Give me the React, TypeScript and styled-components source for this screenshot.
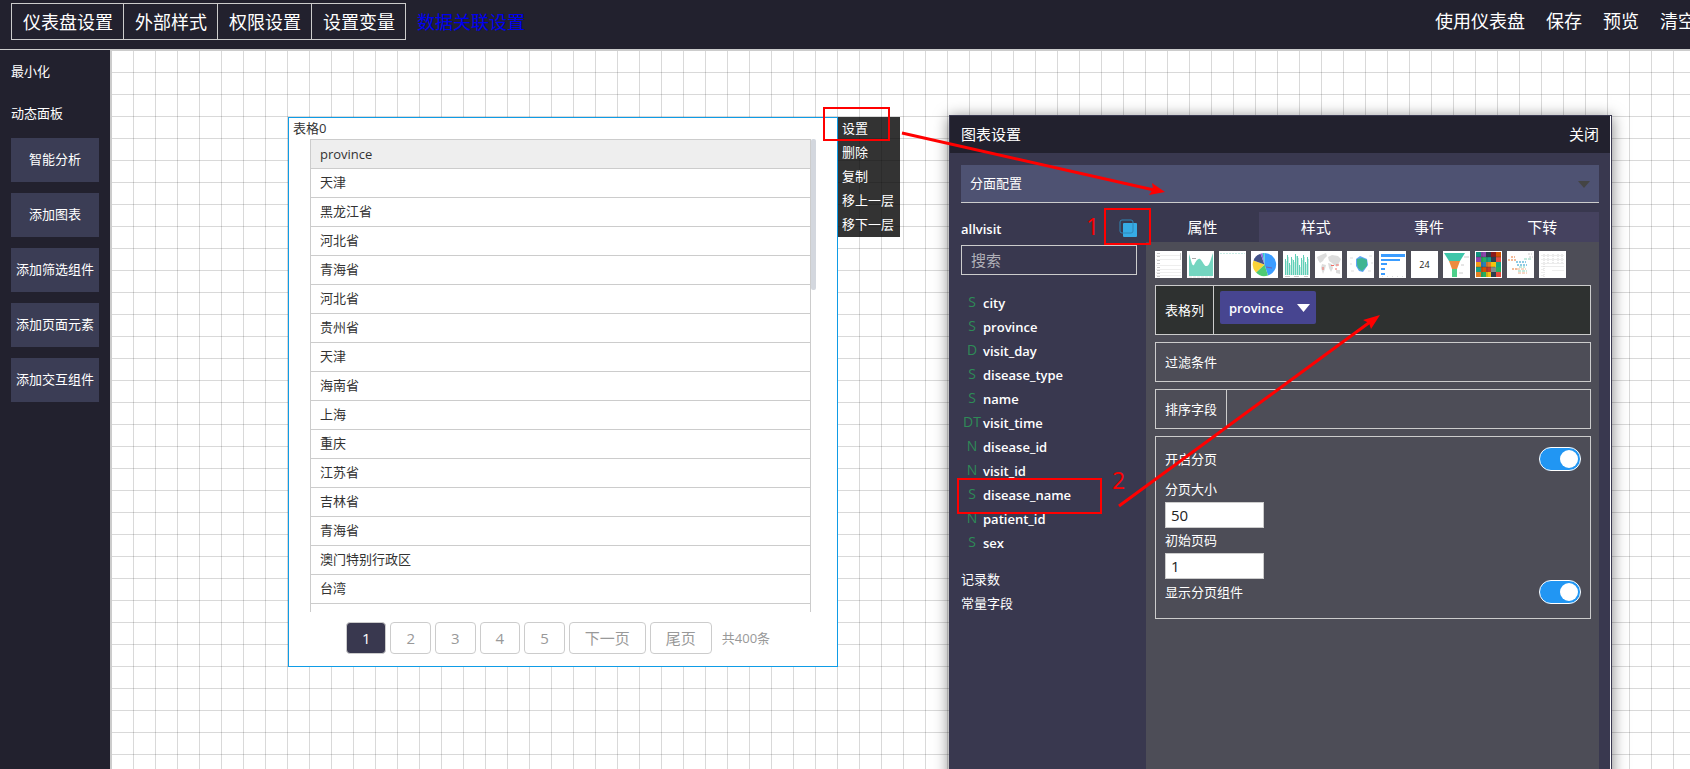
import React from "react";
import styled, { createGlobalStyle, css } from "styled-components";

const GlobalStyle = createGlobalStyle`
  *, *::before, *::after { box-sizing: border-box; }
  body {
    margin: 0;
    overflow: hidden;
    font-family: "Open Sans", "Noto Sans CJK SC", sans-serif;
    font-size: 13px;
    line-height: 24px;
    color: #333;
  }
  button, input, select { font: inherit; color: inherit; margin: 0; }
  a { text-decoration: none; }
`;

const Page = styled.div`
  display: flex;
  flex-direction: column;
  height: 100vh;
  overflow: hidden;
`;

const Header = styled.header`
  display: flex;
  flex: none;
  align-items: flex-start;
  justify-content: space-between;
  height: 50px;
  padding: 3px 0 0 11px;
  overflow: hidden;
  background: #22212e;
  border-bottom: 1px solid #ccc;
  font-size: 18px;
  line-height: 37px;
  white-space: nowrap;
`;

const HeaderGroup = styled.div`
  display: flex;
  align-items: flex-start;
`;

const HeaderButton = styled.button`
  height: 37px;
  padding: 1px 10px 0 11px;
  background: none;
  border: 1px solid #ccc;
  color: #fff;
  line-height: 34px;
  & + & { margin-left: -1px; }
`;

const RelationLink = styled.a`
  margin-left: 11px;
  color: #0000ee;
  line-height: 38px;
`;

const Actions = styled.nav`
  display: flex;
  gap: 21px;
  margin-right: -6px;
`;

const Action = styled.a`
  color: #fff;
`;

const Body = styled.div`
  display: flex;
  flex: 1;
  min-height: 0;
`;

const Sidebar = styled.aside`
  display: flex;
  flex: none;
  flex-direction: column;
  gap: 11px;
  width: 110px;
  padding: 0 11px;
  background: #22212e;
  color: #fff;
`;

const SideTitles = styled.div`
  display: flex;
  flex-direction: column;
  height: 77px;
  line-height: 44px;
  span { height: 44px; line-height: 42px; }
`;

const SideButton = styled.button`
  height: 44px;
  padding: 0 0 2px;
  background: #3b3d55;
  border: 0;
  white-space: nowrap;
`;

const Canvas = styled.main`
  position: relative;
  flex: 1;
  overflow: hidden;
  background-color: #fff;
  background-image:
    linear-gradient(to right, transparent 21px, rgba(0, 0, 0, 0.15) 21px),
    linear-gradient(to bottom, transparent 21px, rgba(0, 0, 0, 0.15) 21px);
  background-size: 22px 22px;
  border: solid #ccc;
  border-width: 1px 0 0 2px;
`;

const Widget = styled.section`
  position: absolute;
  top: 66px;
  left: 176px;
  display: flex;
  flex-direction: column;
  width: 550px;
  height: 550px;
  background: #fff;
  border: 1px solid #0f9ce6;
`;

const WidgetTitle = styled.div`
  height: 21px;
  padding-left: 4px;
  line-height: 21px;
`;

const TableScroll = styled.div`
  display: flex;
  align-items: flex-start;
  height: 473px;
  margin: 0 21px;
  overflow: hidden;
`;

const DataTable = styled.table`
  flex: 1;
  border-collapse: collapse;
`;

const Cell = styled.td<{ $head?: boolean }>`
  height: 29px;
  padding: ${(p) => (p.$head ? "0 9px" : "0 9px 2px")};
  border: 1px solid #ccc;
  background: ${(p) => (p.$head ? "#eee" : "#fff")};
  font-weight: 400;
  line-height: ${(p) => (p.$head ? 28 : 26)}px;
  text-align: left;
`;

const ScrollThumb = styled.div`
  flex: none;
  width: 5px;
  height: 151px;
  background: #d3d7de;
  border-radius: 2px;
`;

const Pager = styled.nav`
  display: flex;
  gap: 4px;
  justify-content: center;
  margin-top: 10px;
  padding-right: 10px;
  color: #999;
`;

const PageButton = styled.button<{ $active?: boolean }>`
  min-width: 40px;
  height: 32px;
  padding: 0 15px;
  background: ${(p) => (p.$active ? "#39384f" : "#fff")};
  border: 1px solid #ccc;
  border-radius: 4px;
  color: ${(p) => (p.$active ? "#fff" : "#999")};
  font-size: 15px;
  line-height: 28px;
`;

const Total = styled.span`
  margin-left: 6px;
  line-height: 33px;
`;

const Menu = styled.menu`
  position: absolute;
  top: -1px;
  left: 549px;
  display: flex;
  flex-direction: column;
  margin: 0;
  padding: 0;
  background: rgba(0, 0, 0, 0.8);
`;

const MenuItem = styled.button`
  height: 24px;
  padding: 0 6px 2px 4px;
  background: none;
  border: 0;
  color: #fff;
  line-height: 22px;
  text-align: left;
  white-space: nowrap;
`;

const Panel = styled.section`
  position: absolute;
  top: 64px;
  bottom: -20px;
  left: 837px;
  display: flex;
  flex-direction: column;
  width: 663px;
  padding-right: 1px;
  background: linear-gradient(to left, #fff 1px, #39384f 1px);
  border: 1px solid #39384f;
  box-shadow: 0 2px 14px rgba(0, 0, 0, 0.5);
  color: #fff;
`;

const PanelHeader = styled.header`
  display: flex;
  justify-content: space-between;
  padding: 0 11px;
  background: #22212e;
  font-size: 15px;
  line-height: 37px;
`;

const CloseButton = styled.button`
  padding: 0;
  background: none;
  border: 0;
`;

const FacetRow = styled.div`
  position: relative;
  padding: 12px 11px 9px;
`;

const FacetSelect = styled.select`
  display: block;
  width: 100%;
  height: 38px;
  padding: 0 9px 2px;
  appearance: none;
  background: #4e5272;
  border: 0;
  border-bottom: 1px solid #ccc;
  border-radius: 0;
`;

const FacetArrow = styled.svg`
  position: absolute;
  top: 28px;
  right: 20px;
  pointer-events: none;
`;

const PanelBody = styled.div`
  display: flex;
  flex: 1;
  padding-right: 11px;
`;

const FieldColumn = styled.div`
  flex: none;
  width: 196px;
  padding: 0 9px 0 11px;
`;

const DatasetRow = styled.div`
  display: flex;
  align-items: center;
  justify-content: space-between;
  height: 33px;
  font-weight: 600;
`;

const IconButton = styled.button`
  display: block;
  width: 18px;
  height: 18px;
  margin-top: -1px;
  padding: 0;
  background: none;
  border: 0;
`;

const Search = styled.input`
  display: block;
  width: 100%;
  height: 30px;
  padding: 0 9px 1px;
  background: none;
  border: 1px solid #ccc;
  font-size: 15px;
  &::placeholder { color: #b0b0b8; opacity: 1; }
`;

const FieldList = styled.ul`
  margin: 16px 0 12px;
  padding: 0;
  list-style: none;
`;

const FieldItem = styled.li`
  display: flex;
  font-weight: 600;
  white-space: nowrap;
`;

const FieldType = styled.span`
  flex: none;
  width: 22px;
  color: #2e8b57;
  font-size: 14px;
  font-weight: 400;
  line-height: 22px;
  text-align: center;
`;

const SettingsColumn = styled.div`
  display: flex;
  flex: 1;
  flex-direction: column;
  min-width: 0;
`;

const Tabs = styled.div`
  display: flex;
`;

const Tab = styled.button<{ $active?: boolean }>`
  flex: 1;
  height: 30px;
  padding: 0;
  background: ${(p) => (p.$active ? "#39384f" : "#45425f")};
  border: 0;
  font-size: 15px;
`;

const Settings = styled.div`
  display: flex;
  flex: 1;
  flex-direction: column;
  gap: 7px;
  padding: 9px 8px 0 9px;
  background: #4d4d57;
`;

const ChartTypes = styled.div`
  display: flex;
  gap: 5px;
`;

const ChartType = styled.button`
  width: 27px;
  height: 27px;
  padding: 0;
  overflow: hidden;
  background: #fff;
  border: 0;
  color: #222;
  font-size: 9px;
  line-height: 27px;
  text-align: center;
  svg { display: block; }
`;

const boxBorder = css`
  border: 1px solid #ccc;
`;

const FieldBox = styled.div<{ $dark?: boolean }>`
  ${boxBorder}
  display: flex;
  height: ${(p) => (p.$dark ? 50 : 40)}px;
  background: ${(p) => (p.$dark ? "#2e3130" : "transparent")};
`;

const FieldLabel = styled.div<{ $divided?: boolean }>`
  display: flex;
  align-items: center;
  padding: 0 9px;
  border-right: ${(p) => (p.$divided ? "1px solid #ccc" : "0")};
`;

const Chip = styled.button`
  display: flex;
  align-items: center;
  justify-content: space-between;
  width: 96px;
  height: 33px;
  margin: 5px 6px;
  padding: 0 6px 0 9px;
  background: #474590;
  border: 0;
  border-radius: 2px;
  font-weight: 600;
`;

const PagingBox = styled.div`
  ${boxBorder}
  display: flex;
  flex-direction: column;
  height: 183px;
  padding: 10px 9px 0;
`;

const SwitchRow = styled.label`
  display: flex;
  align-items: center;
  justify-content: space-between;
`;

const Switch = styled.input`
  display: flex;
  align-items: center;
  justify-content: flex-end;
  width: 42px;
  height: 24px;
  padding: 0 2px;
  appearance: none;
  background: #2196f3;
  border: 1px solid #fff;
  border-radius: 12px;
  &::before {
    content: "";
    width: 18px;
    height: 18px;
    background: #fff;
    border-radius: 50%;
  }
`;

const NumberField = styled.label`
  display: flex;
  flex-direction: column;
  align-items: flex-start;
  line-height: 23px;
`;

const NumberGroup = styled.div`
  display: flex;
  flex-direction: column;
  gap: 1px;
  margin: 7px 0 1px;
`;

const NumberInput = styled.input`
  width: 99px;
  height: 26px;
  margin-top: 1px;
  padding: 0 5px;
  background: #fff;
  border: 1px solid #ccc;
  color: #222;
  font-size: 15px;
`;

const Marks = styled.svg`
  position: absolute;
  top: 0;
  left: 0;
  overflow: visible;
  pointer-events: none;
`;

const Ticks = ({ ys, w = 3 }: { ys: number[]; w?: number }) => (
  <>{ys.map((y) => <rect key={y} x={2} y={y} width={w} height={1} fill="#ccc" />)}</>
);

const bars = [16, 20, 12, 18, 15, 21, 19, 10, 17, 20, 13, 18];
const treeColors = [
  "#13937f", "#8e44ad", "#2c3e50", "#8b1a1a", "#d35400",
  "#8e44ad", "#27ae60", "#16a085", "#2c3e50", "#e74c3c",
  "#f39c12", "#2980b9", "#e67e22", "#f1c40f", "#16a085",
  "#16a085", "#d35400", "#c0392b", "#7f8c8d", "#27ae60",
  "#e67e22", "#27ae60", "#f1c40f", "#2c3e50", "#e74c3c",
];

const chartIcons: { name: string; art: React.ReactNode }[] = [
  {
    name: "表格",
    art: (
      <>
        <Ticks ys={[2, 5, 9, 12, 16, 19, 22, 25]} />
        {[4, 8, 14, 18, 21, 24].map((y) => <path key={y} d={`M1 ${y}.5H26`} stroke="#eee" />)}
        <path d="M25.5 2V9" stroke="#ccc" />
      </>
    ),
  },
  {
    name: "折线图",
    art: (
      <>
        <path d="M2 3C4 8 5 16 7 14C9 10 11 7 13 8C16 10 17 16 20 15C23 14 24 7 26 2V25H2Z" fill="#74d5c0" />
        <path d="M5 7.5H9" stroke="#aaa" />
        <path d="M2 26H26" stroke="#e2e2e2" strokeDasharray="3 1" />
      </>
    ),
  },
  { name: "散点图", art: <path d="M1 2.5H26" stroke="#c9ece5" strokeDasharray="2 1" /> },
  {
    name: "饼图",
    art: (
      <>
        <path d="M13.5 13.5V2A11.5 11.5 0 0 1 17 24.5Z" fill="#3a9cff" />
        <path d="M13.5 13.5L17 24.5A11.5 11.5 0 0 1 5 21.5Z" fill="#4dcb73" />
        <path d="M13.5 13.5L5 21.5A11.5 11.5 0 0 1 2.5 9.5Z" fill="#fad337" />
        <path d="M13.5 13.5L2.5 9.5A11.5 11.5 0 0 1 9.5 2.7Z" fill="#435188" />
        <path d="M13.5 13.5L9.5 2.7L11.5 2.1Z" fill="#975fe5" />
        <path d="M13.5 13.5L11.5 2.1L13.5 2Z" fill="#36cbcb" />
        <path d="M15 16L21 17" stroke="#7060b0" />
      </>
    ),
  },
  {
    name: "柱状图",
    art: (
      <>
        {bars.map((h, i) => (
          <rect key={i} x={2 + i * 2} y={24 - h} width={1} height={h} fill="#5fcfb6" />
        ))}
        {bars.map((h, i) => (
          <rect key={i} x={3 + i * 2} y={26 - h} width={1} height={h - 2} fill="#c4ece3" />
        ))}
        <path d="M2 25.5H7M11 25.5H16M21 25.5H25" stroke="#ccc" />
      </>
    ),
  },
  {
    name: "地图",
    art: (
      <>
        <path d="M2 6L6 4L11 2L12 5L9 8L8 10L5 12L3 9ZM7 13L11 14L10 18L8 23L6 17ZM13 6L17 4L23 5L26 8L24 12L22 16L19 14L17 12L14 10ZM13 12L17 13L18 17L16 21L14 17ZM21 19L25 19L25 23L21 22Z" fill="#dcdcdc" />
        <path d="M16 14.5H19M21 14H24M20 18H22M8 16V19" stroke="#f36a62" />
      </>
    ),
  },
  {
    name: "雷达图",
    art: (
      <>
        <path d="M9 8L13 5L20 8L21 14L16 21L12 20L9 15Z" fill="#5ea5f5" />
        <path d="M10 8L15 7L20 9L20 15L15 20L11 17L10 13Z" fill="#3fb592" />
        <path d="M3 7H6M22 5H25M3 13H5M24 12H26M4 20H7M21 20H24" stroke="#ddd" />
      </>
    ),
  },
  {
    name: "条形图",
    art: (
      <>
        <rect x={2} y={3} width={24} height={3} fill="#3a9cff" />
        <rect x={2} y={8} width={19} height={2} fill="#3a9cff" />
        {[6, 4, 4].map((w, i) => (
          <rect key={i} x={2} y={12 + i * 5} width={w} height={2} fill="#3a9cff" />
        ))}
        <path d="M3 25.5H27" stroke="#ddd" strokeDasharray="1 4" />
      </>
    ),
  },
  { name: "指标", art: null },
  {
    name: "漏斗图",
    art: (
      <>
        <path d="M1 2H22L17 10H6Z" fill="#3ec6a9" />
        <path d="M6 10H17L14 18H9Z" fill="#ec8c40" />
        <path d="M9 18H14V26H9Z" fill="#4dd08a" />
        <path d="M21 6H26M18 14H21M16 22H20" stroke="#ccc" />
      </>
    ),
  },
  {
    name: "矩形树图",
    art: (
      <>
        {treeColors.map((c, i) => (
          <rect key={i} x={1 + (i % 5) * 5} y={1 + Math.floor(i / 5) * 5} width={5} height={5} fill={c} />
        ))}
        <path d="M7 1V26M12 1V26M1 6H26M1 16H20" stroke="#333" strokeOpacity="0.35" />
      </>
    ),
  },
  {
    name: "词云",
    art: (
      <>
        <path d="M1 9H9M4 6H8M5 18H10" stroke="#f3bb99" strokeWidth="2" strokeDasharray="2 1" />
        <path d="M10 18H19M11 22H20" stroke="#efb08c" strokeDasharray="3 1" />
        <path d="M9 11H19M10 14H20" stroke="#8ecbe4" strokeWidth="2" strokeDasharray="2 1" />
        <path d="M11 20H20M17 8H25M12 16H18" stroke="#8bd4bb" strokeDasharray="3 1" />
        <path d="M21 3H25M22 6H26" stroke="#ccc" strokeDasharray="2 1" />
      </>
    ),
  },
  {
    name: "透视表",
    art: (
      <>
        <path d="M2 4.5H25M2 8.5H25M2 12.5H25M2 15.5H25" stroke="#ececec" />
        <path d="M5 3V26M9 3V13M14 3V13M19 3V13M23 3V13" stroke="#d5d5d5" strokeDasharray="1 1" />
        <path d="M2 18.5H5M2 21.5H5M2 24.5H5M13 19.5H25" stroke="#eee" />
      </>
    ),
  },
];

const provinces = [
  "天津", "黑龙江省", "河北省", "青海省", "河北省", "贵州省", "天津", "海南省",
  "上海", "重庆", "江苏省", "吉林省", "青海省", "澳门特别行政区", "台湾", "\u00a0",
];

const fields: [string, string][] = [
  ["S", "city"], ["S", "province"], ["D", "visit_day"], ["S", "disease_type"],
  ["S", "name"], ["DT", "visit_time"], ["N", "disease_id"], ["N", "visit_id"],
  ["S", "disease_name"], ["N", "patient_id"], ["S", "sex"],
];

const TableWidget = () => (
  <Widget>
    <WidgetTitle>表格0</WidgetTitle>
    <TableScroll>
      <DataTable>
        <thead>
          <tr><Cell as="th" $head>province</Cell></tr>
        </thead>
        <tbody>
          {provinces.map((name, i) => (
            <tr key={i}><Cell>{name}</Cell></tr>
          ))}
        </tbody>
      </DataTable>
      <ScrollThumb />
    </TableScroll>
    <Pager>
      {["1", "2", "3", "4", "5", "下一页", "尾页"].map((label) => (
        <PageButton key={label} $active={label === "1"}>{label}</PageButton>
      ))}
      <Total>共400条</Total>
    </Pager>
    <Menu>
      {["设置", "删除", "复制", "移上一层", "移下一层"].map((label) => (
        <MenuItem key={label}>{label}</MenuItem>
      ))}
    </Menu>
  </Widget>
);

const ChartPanel = () => (
  <Panel>
    <PanelHeader>
      <span>图表设置</span>
      <CloseButton>关闭</CloseButton>
    </PanelHeader>
    <FacetRow>
      <FacetSelect aria-label="分面配置">
        <option>分面配置</option>
      </FacetSelect>
      <FacetArrow width="12" height="7"><path d="M0 0H12L6 7Z" fill="#444" /></FacetArrow>
    </FacetRow>
    <PanelBody>
      <FieldColumn>
        <DatasetRow>
          <span>allvisit</span>
          <IconButton aria-label="切换数据集">
            <svg width="18" height="18" viewBox="0 0 18 18">
              <rect x="4" y="4" width="14" height="14" rx="1" fill="#36abe6" />
              <rect x="1" y="1" width="13" height="13" rx="2" fill="none" stroke="#2f86b8" />
            </svg>
          </IconButton>
        </DatasetRow>
        <Search placeholder="搜索" aria-label="搜索" />
        <FieldList>
          {fields.map(([type, name]) => (
            <FieldItem key={name}>
              <FieldType>{type}</FieldType>
              {name}
            </FieldItem>
          ))}
        </FieldList>
        <div>记录数</div>
        <div>常量字段</div>
      </FieldColumn>
      <SettingsColumn>
        <Tabs>
          {["属性", "样式", "事件", "下转"].map((label) => (
            <Tab key={label} $active={label === "属性"}>{label}</Tab>
          ))}
        </Tabs>
        <Settings>
          <ChartTypes>
            {chartIcons.map(({ name, art }) => (
              <ChartType key={name} aria-label={name}>
                {art ? <svg width="27" height="27" viewBox="0 0 27 27">{art}</svg> : "24"}
              </ChartType>
            ))}
          </ChartTypes>
          <FieldBox $dark>
            <FieldLabel $divided>表格列</FieldLabel>
            <Chip>
              province
              <svg width="13" height="8"><path d="M0 0H13L6.5 8Z" fill="#fff" /></svg>
            </Chip>
          </FieldBox>
          <FieldBox>
            <FieldLabel>过滤条件</FieldLabel>
          </FieldBox>
          <FieldBox>
            <FieldLabel $divided>排序字段</FieldLabel>
          </FieldBox>
          <PagingBox>
            <SwitchRow>
              开启分页
              <Switch type="checkbox" role="switch" defaultChecked />
            </SwitchRow>
            <NumberGroup>
              <NumberField>
                分页大小
                <NumberInput defaultValue="50" />
              </NumberField>
              <NumberField>
                初始页码
                <NumberInput defaultValue="1" />
              </NumberField>
            </NumberGroup>
            <SwitchRow>
              显示分页组件
              <Switch type="checkbox" role="switch" defaultChecked />
            </SwitchRow>
          </PagingBox>
        </Settings>
      </SettingsColumn>
    </PanelBody>
  </Panel>
);

const GuideMarks = () => (
  <Marks width="1" height="1">
    <g fill="none" stroke="#f00" strokeWidth="2">
      <rect x="712" y="57" width="65" height="32" />
      <rect x="993" y="158" width="45" height="35" />
      <rect x="846" y="428" width="143" height="34" />
      <path d="M790 82L1042 139M1007 455L1258 271" strokeWidth="3" />
    </g>
    <path d="M1053 141L1037 144L1041 138L1040 132ZM1268 264L1259 278L1257 272L1251 269Z" fill="#f00" />
    <g fill="#f00" fontSize="23">
      <text x="974" y="184">1</text>
      <text x="1000" y="438">2</text>
    </g>
  </Marks>
);

export default function App() {
  return (
    <Page>
      <GlobalStyle />
      <Header>
        <HeaderGroup>
          {["仪表盘设置", "外部样式", "权限设置", "设置变量"].map((label) => (
            <HeaderButton key={label}>{label}</HeaderButton>
          ))}
          <RelationLink href="#relation">数据关联设置</RelationLink>
        </HeaderGroup>
        <Actions>
          {["使用仪表盘", "保存", "预览", "清空"].map((label) => (
            <Action key={label} href="#action">{label}</Action>
          ))}
        </Actions>
      </Header>
      <Body>
        <Sidebar>
          <SideTitles>
            <span>最小化</span>
            <span>动态面板</span>
          </SideTitles>
          {["智能分析", "添加图表", "添加筛选组件", "添加页面元素", "添加交互组件"].map((label) => (
            <SideButton key={label}>{label}</SideButton>
          ))}
        </Sidebar>
        <Canvas>
          <TableWidget />
          <ChartPanel />
          <GuideMarks />
        </Canvas>
      </Body>
    </Page>
  );
}
